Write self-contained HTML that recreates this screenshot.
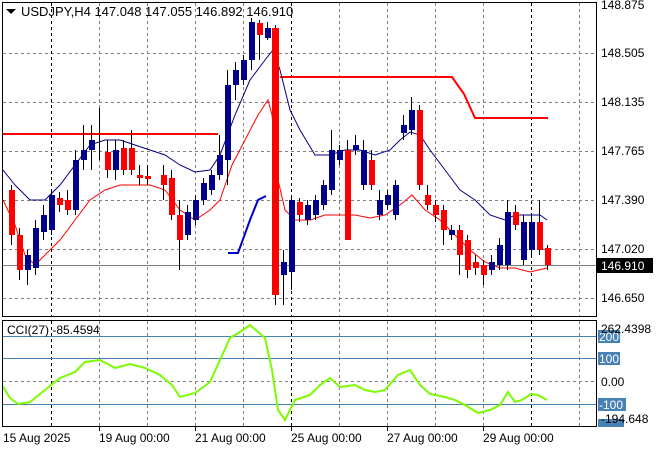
<!DOCTYPE html><html><head><style>body{margin:0;background:#fff}svg{display:block;font-family:"Liberation Sans",sans-serif;font-size:12px}</style></head><body>
<svg width="660" height="450" xmlns="http://www.w3.org/2000/svg">
<rect width="660" height="450" fill="#fff"/>
<g stroke="#808080" stroke-dasharray="3,3" stroke-width="1">
<line x1="3" y1="53.5" x2="596" y2="53.5"/><line x1="3" y1="102.5" x2="596" y2="102.5"/><line x1="3" y1="151.5" x2="596" y2="151.5"/><line x1="3" y1="200.5" x2="596" y2="200.5"/><line x1="3" y1="249.5" x2="596" y2="249.5"/><line x1="3" y1="298.5" x2="596" y2="298.5"/>
<line x1="99.5" y1="3" x2="99.5" y2="316"/><line x1="147.5" y1="3" x2="147.5" y2="316"/><line x1="195.5" y1="3" x2="195.5" y2="316"/><line x1="243.5" y1="3" x2="243.5" y2="316"/><line x1="339.5" y1="3" x2="339.5" y2="316"/><line x1="387.5" y1="3" x2="387.5" y2="316"/><line x1="435.5" y1="3" x2="435.5" y2="316"/><line x1="483.5" y1="3" x2="483.5" y2="316"/><line x1="579.5" y1="3" x2="579.5" y2="316"/>
<line x1="99.5" y1="321" x2="99.5" y2="426"/><line x1="147.5" y1="321" x2="147.5" y2="426"/><line x1="195.5" y1="321" x2="195.5" y2="426"/><line x1="243.5" y1="321" x2="243.5" y2="426"/><line x1="339.5" y1="321" x2="339.5" y2="426"/><line x1="387.5" y1="321" x2="387.5" y2="426"/><line x1="435.5" y1="321" x2="435.5" y2="426"/><line x1="483.5" y1="321" x2="483.5" y2="426"/><line x1="579.5" y1="321" x2="579.5" y2="426"/>
<line x1="3" y1="381.5" x2="596" y2="381.5"/>
</g>
<g stroke="#000" stroke-dasharray="3,3"><line x1="51.5" y1="3" x2="51.5" y2="316"/><line x1="291.5" y1="3" x2="291.5" y2="316"/><line x1="531.5" y1="3" x2="531.5" y2="316"/><line x1="51.5" y1="321" x2="51.5" y2="426"/><line x1="291.5" y1="321" x2="291.5" y2="426"/><line x1="531.5" y1="321" x2="531.5" y2="426"/></g>
<line x1="3" y1="265.5" x2="596" y2="265.5" stroke="#808080"/>
<g fill="none" stroke="#f00" stroke-width="2"><polyline points="3,134 218,134"/><polyline points="280,77 452,77 464,94 475,118 548,118"/></g>
<polyline fill="none" stroke="#00c" stroke-width="2" points="228,253 238,253 250,220 258,200 266,196"/>
<polyline fill="none" stroke="#000080" points="3,170 15,185 30,200 45,200 60,185 75,165 90,145 105,140 120,140 135,145 150,150 165,155 180,165 195,172 210,170 220,155 235,115 250,80 265,60 273,50 280,70 290,110 300,130 315,155 330,155 345,150 360,150 375,155 390,150 400,140 410,132 420,135 430,150 445,170 460,190 475,200 490,215 505,220 515,215 530,215 540,215 547,220"/>
<polyline fill="none" stroke="#f00" points="3,200 15,225 25,255 35,265 45,255 60,240 75,220 90,200 105,190 120,185 135,185 150,185 165,190 180,210 195,220 210,210 220,200 232,165 245,140 258,115 268,100 272,115 278,180 285,210 295,220 310,220 325,215 340,215 355,215 370,218 385,215 400,205 412,195 425,210 440,220 455,235 470,250 485,262 500,268 515,268 530,272 547,268"/>
<g>
<path d="M11.5 185V245M19.5 228V280M27.5 250V285M35.5 220V275M43.5 205V240M51.5 190V235M59.5 192V212M67.5 190V215M75.5 150V215M83.5 125V170M91.5 125V170M99.5 108V160M107.5 140V178M115.5 140V180M123.5 140V175M131.5 130V175M139.5 165V185M147.5 165V185M163.5 165V200M171.5 170V220M179.5 200V270M187.5 205V240M195.5 195V225M203.5 178V205M211.5 170V195M219.5 135V180M227.5 70V185M235.5 62V100M243.5 55V85M251.5 18V70M259.5 20V60M267.5 22V40M275.5 25V305M283.5 250V305M291.5 195V290M299.5 198V222M307.5 200V225M315.5 195V220M323.5 180V210M331.5 130V195M339.5 145V165M347.5 140V240M355.5 135V155M363.5 140V190M371.5 150V190M379.5 190V220M387.5 190V210M395.5 180V220M403.5 115V140M411.5 97V135M419.5 105V190M427.5 185V210M435.5 200V222M443.5 205V245M451.5 225V240M459.5 225V275M467.5 235V278M475.5 255V275M483.5 260V285M491.5 255V275M499.5 238V270M507.5 200V270M515.5 205V230M523.5 215V265M531.5 215V255M539.5 200V255M547.5 245V270" stroke="#000" stroke-width="1" fill="none"/>
<g fill="#f00"><rect x="9" y="190" width="6" height="45"/><rect x="17" y="235" width="6" height="35"/><rect x="57" y="198" width="6" height="7"/><rect x="65" y="200" width="6" height="10"/><rect x="105" y="152" width="6" height="18"/><rect x="121" y="148" width="6" height="22"/><rect x="129" y="148" width="6" height="22"/><rect x="137" y="175" width="6" height="3"/><rect x="145" y="176" width="6" height="3"/><rect x="161" y="175" width="6" height="10"/><rect x="169" y="178" width="6" height="37"/><rect x="177" y="215" width="6" height="25"/><rect x="257" y="23" width="6" height="12"/><rect x="272" y="28" width="7" height="267"/><rect x="297" y="202" width="6" height="13"/><rect x="345" y="150" width="6" height="90"/><rect x="369" y="160" width="6" height="25"/><rect x="417" y="110" width="6" height="75"/><rect x="425" y="195" width="6" height="10"/><rect x="433" y="205" width="6" height="10"/><rect x="441" y="210" width="6" height="20"/><rect x="457" y="230" width="6" height="25"/><rect x="465" y="240" width="6" height="30"/><rect x="473" y="262" width="6" height="6"/><rect x="481" y="265" width="6" height="10"/><rect x="513" y="212" width="6" height="13"/><rect x="537" y="222" width="6" height="28"/><rect x="545" y="248" width="6" height="17"/></g>
<g fill="#00008b"><rect x="25" y="255" width="6" height="15"/><rect x="33" y="228" width="6" height="40"/><rect x="41" y="215" width="6" height="17"/><rect x="49" y="195" width="6" height="35"/><rect x="73" y="160" width="6" height="50"/><rect x="81" y="150" width="6" height="10"/><rect x="89" y="140" width="6" height="10"/><rect x="113" y="150" width="6" height="20"/><rect x="185" y="212" width="6" height="23"/><rect x="193" y="200" width="6" height="20"/><rect x="201" y="183" width="6" height="17"/><rect x="209" y="175" width="6" height="15"/><rect x="217" y="155" width="6" height="20"/><rect x="225" y="85" width="6" height="75"/><rect x="233" y="70" width="6" height="15"/><rect x="241" y="60" width="6" height="20"/><rect x="249" y="22" width="6" height="38"/><rect x="265" y="28" width="6" height="10"/><rect x="281" y="262" width="6" height="13"/><rect x="289" y="200" width="6" height="72"/><rect x="305" y="205" width="6" height="15"/><rect x="313" y="200" width="6" height="15"/><rect x="321" y="185" width="6" height="20"/><rect x="329" y="150" width="6" height="40"/><rect x="337" y="150" width="6" height="10"/><rect x="353" y="145" width="6" height="5"/><rect x="361" y="150" width="6" height="35"/><rect x="377" y="200" width="6" height="15"/><rect x="385" y="195" width="6" height="10"/><rect x="393" y="185" width="6" height="30"/><rect x="401" y="125" width="6" height="8"/><rect x="409" y="110" width="6" height="20"/><rect x="449" y="230" width="6" height="5"/><rect x="489" y="262" width="6" height="8"/><rect x="497" y="245" width="6" height="20"/><rect x="505" y="212" width="6" height="53"/><rect x="521" y="222" width="6" height="38"/><rect x="529" y="222" width="6" height="28"/></g>
</g>
<g stroke="#4682b4"><line x1="3" y1="336.5" x2="596" y2="336.5"/><line x1="3" y1="358.5" x2="596" y2="358.5"/><line x1="3" y1="404.5" x2="596" y2="404.5"/></g>
<polyline fill="none" stroke="#7cfc00" stroke-width="2" points="2,385 10,398 18,404 30,402 45,390 60,378 75,372 85,362 100,360 115,368 130,364 145,368 160,375 172,385 180,397 195,393 210,382 220,360 230,338 240,332 250,325 265,338 272,370 278,410 285,420 295,400 310,395 320,385 330,378 340,387 355,385 365,390 375,392 385,390 398,375 410,370 420,385 430,394 445,397 455,400 465,405 478,413 490,410 500,405 508,392 515,402 522,400 531,394 538,395 547,400"/>
<rect x="2.5" y="2.5" width="594" height="314" fill="none" stroke="#000"/>
<rect x="2.5" y="320.5" width="594" height="106" fill="none" stroke="#000"/>
<path d="M6 9h10l-5 5z" fill="#000"/>
<text x="21" y="16" fill="#000" font-size="13">USDJPY,H4  147.048 147.055 146.892 146.910</text>
<text x="7" y="334" fill="#000">CCI(27) -85.4594</text>
<g fill="#000">
<text x="601" y="9">148.875</text><text x="601" y="57">148.505</text><text x="601" y="106">148.135</text><text x="601" y="155">147.765</text><text x="601" y="204">147.390</text><text x="601" y="253">147.020</text><text x="601" y="302">146.650</text>
</g>
<rect x="597" y="258" width="56" height="15" fill="#000"/><text x="601" y="270" fill="#fff">146.910</text>
<g fill="#4682b4"><rect x="598" y="330" width="22" height="13"/><rect x="598" y="352" width="22" height="13"/><rect x="598" y="398" width="28" height="13"/><rect x="598" y="419" width="26" height="8"/></g>
<g fill="#fff"><text x="599" y="341">200</text><text x="599" y="363">100</text><text x="599" y="409">-100</text></g>
<g fill="#000"><text x="601" y="333">262.4398</text><text x="601" y="386">0.00</text><text x="601" y="423">-194.648</text></g>
<g fill="#000"><text x="3" y="442">15 Aug 2025</text><text x="99" y="442">19 Aug 00:00</text><text x="195" y="442">21 Aug 00:00</text><text x="291" y="442">25 Aug 00:00</text><text x="387" y="442">27 Aug 00:00</text><text x="483" y="442">29 Aug 00:00</text></g>
<g stroke="#000"><line x1="99.5" y1="427" x2="99.5" y2="431"/><line x1="195.5" y1="427" x2="195.5" y2="431"/><line x1="291.5" y1="427" x2="291.5" y2="431"/><line x1="387.5" y1="427" x2="387.5" y2="431"/><line x1="483.5" y1="427" x2="483.5" y2="431"/></g>
</svg>
</body></html>
